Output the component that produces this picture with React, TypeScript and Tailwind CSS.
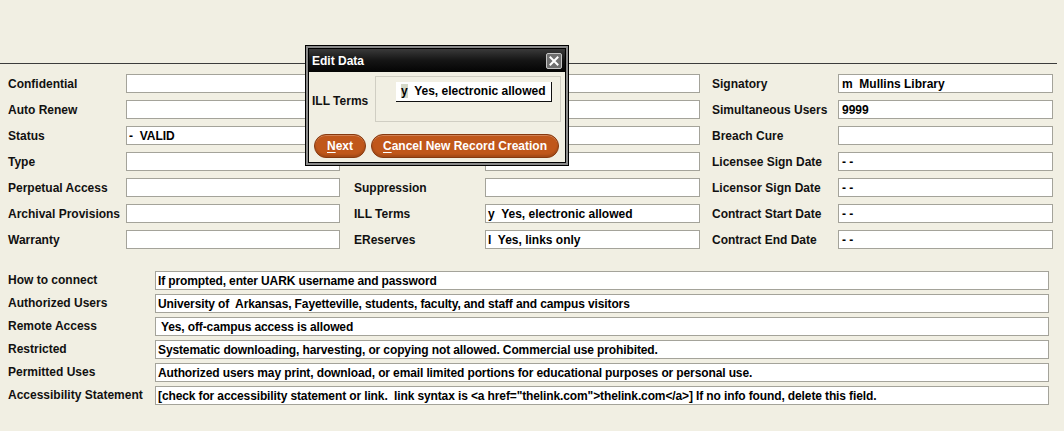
import React from "react";

type FieldProps = { className: string; value?: string; pad?: string };

function Field({ className, value = "", pad = "pl-[2px]" }: FieldProps) {
  return (
    <div
      className={`h-[19px] shrink-0 bg-white border border-[#a4a39a] ${pad} pt-[1px] text-[12px] font-bold leading-[17px] text-black whitespace-pre overflow-hidden ${className}`}
    >
      {value}
    </div>
  );
}

function Label({ className, children }: { className: string; children: React.ReactNode }) {
  return (
    <div
      className={`h-[19px] shrink-0 flex items-center text-[12px] font-bold text-[#111] whitespace-nowrap ${className}`}
    >
      {children}
    </div>
  );
}

const topRows: [string, string, string, string, string, string][] = [
  ["Confidential", "", "", "", "Signatory", "m  Mullins Library"],
  ["Auto Renew", "", "", "", "Simultaneous Users", "9999"],
  ["Status", "-  VALID", "", "", "Breach Cure", ""],
  ["Type", "", "", "", "Licensee Sign Date", "- -"],
  ["Perpetual Access", "", "Suppression", "", "Licensor Sign Date", "- -"],
  ["Archival Provisions", "", "ILL Terms", "y  Yes, electronic allowed", "Contract Start Date", "- -"],
  ["Warranty", "", "EReserves", "l  Yes, links only", "Contract End Date", "- -"],
];

const bottomRows: [string, string][] = [
  ["How to connect", "If prompted, enter UARK username and password"],
  ["Authorized Users", "University of  Arkansas, Fayetteville, students, faculty, and staff and campus visitors"],
  ["Remote Access", " Yes, off-campus access is allowed"],
  ["Restricted", "Systematic downloading, harvesting, or copying not allowed. Commercial use prohibited."],
  ["Permitted Uses", "Authorized users may print, download, or email limited portions for educational purposes or personal use."],
  [
    "Accessibility Statement",
    '[check for accessibility statement or link.  link syntax is <a href="thelink.com">thelink.com</a>] If no info found, delete this field.',
  ],
];

function OrangeButton({ className, first, rest }: { className: string; first: string; rest: string }) {
  return (
    <div
      className={`h-[24px] rounded-full bg-[#c0571b] border border-[#86390f] shadow-[inset_0_1px_0_rgba(255,255,255,0.25),inset_0_-2px_2px_rgba(0,0,0,0.15)] flex items-center justify-center text-white text-[12px] font-bold whitespace-nowrap ${className}`}
    >
      <span className="underline underline-offset-2">{first}</span>
      <span>{rest}</span>
    </div>
  );
}

export default function App() {
  return (
    <div className="relative w-[1064px] h-[431px] bg-[#f1efe3] overflow-hidden font-['Liberation_Sans',Arial,sans-serif]">
      <div className="h-[63px]" />
      <div className="w-[1057px] h-px bg-[#3c3c3c]" />

      <div className="mt-[10px] flex flex-col">
        {topRows.map((r, i) => (
          <div key={i} className="flex h-[26px] pl-[8px]">
            <Label className="w-[118px]">{r[0]}</Label>
            <Field className="w-[214px]" value={r[1]} />
            <Label className="w-[145px] pl-[14px]">{r[2]}</Label>
            <Field className="w-[215px]" value={r[3]} />
            <Label className="w-[138px] pl-[12px]">{r[4]}</Label>
            <Field className="w-[215px]" value={r[5]} pad="pl-[3px]" />
          </div>
        ))}
      </div>

      <div className="mt-[15px] flex flex-col">
        {bottomRows.map((r, i) => (
          <div key={i} className="flex h-[23px] pl-[8px]">
            <Label className="w-[147px] pb-[1px]">{r[0]}</Label>
            <Field className="w-[894px] tracking-[-0.12px]" value={r[1]} />
          </div>
        ))}
      </div>

      {/* Edit Data dialog */}
      <div className="absolute left-[305px] top-[45px] w-[264px] border border-black bg-[#8a8a8a] p-[2px]">
        <div className="border border-black bg-[#f1efe3]">
          <div className="h-[23px] flex items-center justify-between pl-[3px] pr-[3px] bg-gradient-to-b from-[#3a3a3a] via-[#151515] to-[#050505]">
            <span className="text-white text-[12px] font-bold">Edit Data</span>
            <div className="w-[16px] h-[16px] rounded-[2px] bg-[#6f6f6f] border border-[#c4c4c4] flex items-center justify-center">
              <svg width="10" height="10" viewBox="0 0 10 10">
                <path d="M1.5 1.5 L8.5 8.5 M8.5 1.5 L1.5 8.5" stroke="#ffffff" strokeWidth="2" strokeLinecap="square" />
              </svg>
            </div>
          </div>
          <div className="pt-[4px] pb-[4px] px-[2px]">
            <div className="flex">
              <div className="w-[64px] h-[46px] flex items-center pl-[1px] pt-[4px] text-[12px] font-bold text-[#111]">
                ILL Terms
              </div>
              <div className="w-[186px] h-[46px] border border-[#d0cec3] pl-[20px] pt-[5px]">
                <div className="w-[156px] h-[20px] bg-white border-r border-b border-[#111] pl-[5px] text-[12px] font-bold leading-[19px] text-black whitespace-pre">
                  <span className="bg-[#d5d9c9]">y</span>
                  {"  Yes, electronic allowed"}
                </div>
              </div>
            </div>
            <div className="mt-[12px] flex gap-[5px] pl-[3px]">
              <OrangeButton className="w-[52px]" first="N" rest="ext" />
              <OrangeButton className="w-[188px]" first="C" rest="ancel New Record Creation" />
            </div>
          </div>
        </div>
      </div>
    </div>
  );
}
